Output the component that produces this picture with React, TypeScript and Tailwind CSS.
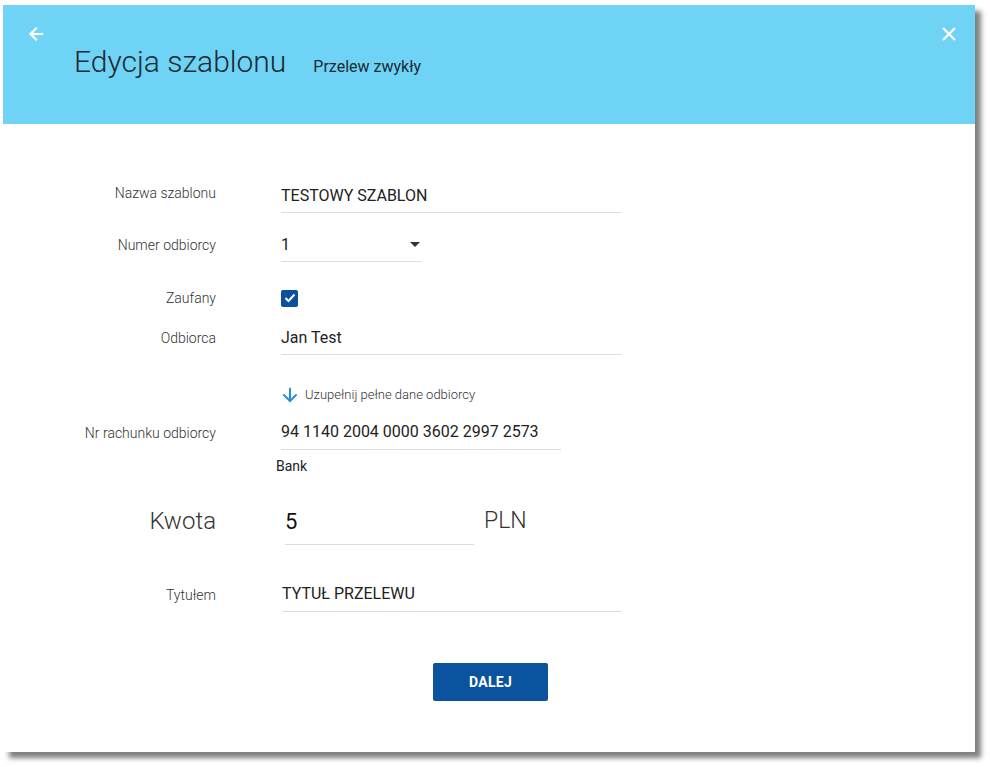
import React from 'react';

// Edycja szablonu przelewu - modal
const font = { fontFamily: 'Roboto, "Liberation Sans", sans-serif' };

const Label: React.FC<{ children: React.ReactNode; className?: string }> = ({ children, className = '' }) => (
  <div className={`w-[213px] shrink-0 text-right text-[14px] font-light text-[#333] leading-[20px] ${className}`}>{children}</div>
);

export default function App() {
  return (
    <div className="min-h-screen bg-white pt-[5px] pl-[3px]" style={font}>
      <div className="w-[972px] h-[747px] bg-white flex flex-col shadow-[6px_6px_5px_rgba(0,0,0,0.5)]">
        {/* header */}
        <div className="h-[119px] bg-[#6fd3f5] flex justify-between shrink-0">
          <div className="flex items-start">
            <button className="mt-[21px] ml-[25px] text-white">
              <svg width="16" height="16" viewBox="0 0 16 16" fill="none" stroke="currentColor" strokeWidth="2.2" strokeLinecap="square">
                <path d="M14 8H3" />
                <path d="M8 2.5 2.5 8 8 13.5" />
              </svg>
            </button>
            <div className="mt-[37px] ml-[30px] flex items-baseline gap-[27px]">
              <span className="text-[30px] font-light text-[#1c2a33] leading-[40px]">Edycja szablonu</span>
              <span className="text-[16px] text-[#1c2a33]">Przelew zwykły</span>
            </div>
          </div>
          <button className="mt-[22px] mr-[19px] self-start text-white">
            <svg width="14" height="14" viewBox="0 0 14 14" stroke="currentColor" strokeWidth="2.2">
              <path d="M1 1l12 12M13 1 1 13" />
            </svg>
          </button>
        </div>

        {/* form */}
        <div className="flex flex-col pt-[54px]">
          <div className="flex items-start">
            <Label className="pt-[5px]">Nazwa szablonu</Label>
            <div className="ml-[65px] w-[340px] h-[35px] border-b border-[#dcdcdc] flex items-center pt-[1px] text-[16px] text-[#222]">TESTOWY SZABLON</div>
          </div>

          <div className="flex items-start mt-[14px]">
            <Label className="pt-[8px]">Numer odbiorcy</Label>
            <div className="ml-[65px] w-[140px] h-[35px] border-b border-[#dcdcdc] flex items-center justify-between pt-[1px] text-[16px] text-[#222]">
              <span>1</span>
              <svg width="10" height="6" viewBox="0 0 10 6" className="mr-[1px]"><path d="M0 0h10L5 5z" fill="#333" /></svg>
            </div>
          </div>

          <div className="flex items-center mt-[24px] h-[23px]">
            <Label>Zaufany</Label>
            <div className="ml-[65px] w-[17px] h-[17px] rounded-[2px] bg-[#0c4f9c] flex items-center justify-center mt-[1px]">
              <svg width="12" height="10" viewBox="0 0 12 10" fill="none" stroke="white" strokeWidth="2">
                <path d="M1.5 5 4.5 8 10.5 1.5" />
              </svg>
            </div>
          </div>

          <div className="flex items-start mt-[11px]">
            <Label className="pt-[8px]">Odbiorca</Label>
            <div className="ml-[65px] w-[340px] h-[35px] border-b border-[#dcdcdc] flex items-center pt-[1px] text-[16px] text-[#222]">Jan Test</div>
          </div>

          <div className="flex items-center mt-[30px] h-[20px]">
            <div className="w-[213px] shrink-0" />
            <div className="ml-[66px] flex items-center gap-[7px]">
              <svg width="16" height="16" viewBox="0 0 16 16" fill="none" stroke="#2a8fd8" strokeWidth="2" strokeLinecap="round">
                <path d="M8 1.5v12.5" />
                <path d="M2 8l6 6 6-6" />
              </svg>
              <span className="text-[13px] font-light text-[#333]">Uzupełnij pełne dane odbiorcy</span>
            </div>
          </div>

          <div className="flex items-start mt-[10px]">
            <Label className="pt-[8px]">Nr rachunku odbiorcy</Label>
            <div className="ml-[65px] w-[280px] h-[35px] border-b border-[#dcdcdc] flex items-center text-[16px] text-[#222]">94 1140 2004 0000 3602 2997 2573</div>
          </div>

          <div className="flex items-center mt-[7px] h-[18px]">
            <div className="w-[213px] shrink-0" />
            <span className="ml-[60px] text-[14px] text-[#222]">Bank</span>
          </div>

          <div className="flex items-start mt-[31px]">
            <div className="w-[213px] shrink-0 text-right text-[24px] font-light text-[#333] leading-[28px] pt-[1px]">Kwota</div>
            <div className="ml-[69px] w-[189px] h-[39px] border-b border-[#dcdcdc] flex items-start pt-[2px] text-[22px] text-[#111] leading-[28px]">5</div>
            <span className="ml-[10px] text-[23px] font-light text-[#333] leading-[28px] pt-[1px]">PLN</span>
          </div>

          <div className="flex items-start mt-[32px]">
            <Label className="pt-[8px]">Tytułem</Label>
            <div className="ml-[66px] w-[340px] h-[35px] border-b border-[#dcdcdc] flex items-center text-[16px] text-[#222]">TYTUŁ PRZELEWU</div>
          </div>

          <div className="flex mt-[51px] pl-[430px]">
            <button className="w-[115px] h-[38px] rounded-[2px] bg-[#0b529f] text-white text-[14px] font-bold tracking-[0.3px]">DALEJ</button>
          </div>
        </div>
      </div>
    </div>
  );
}
